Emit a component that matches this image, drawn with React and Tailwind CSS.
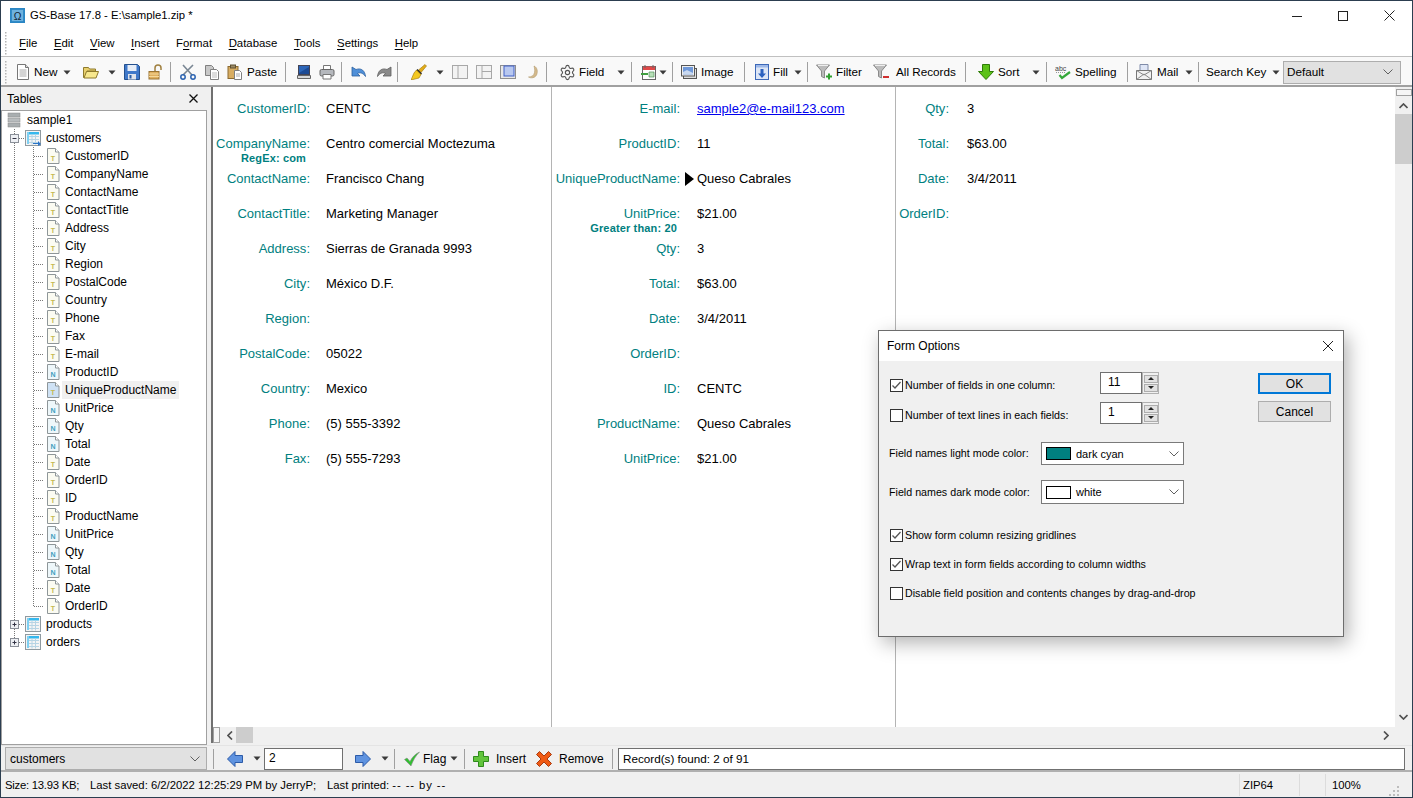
import React from "react";
import { Settings } from "lucide-react";

const S = ({ children, className = "" }) => (
  <svg viewBox="0 0 16 16" className={"w-4 h-4 shrink-0 " + className}>{children}</svg>
);

const Arrow = ({ className = "" }) => (
  <svg viewBox="0 0 8 5" className={"w-2 h-[5px] shrink-0 " + className}><path d="M0.5 0.5h7L4 4.5z" fill="#3a3a3a" /></svg>
);
const Sep = ({ className = "" }) => <div className={"w-px h-5 bg-[#a0a0a0] shrink-0 " + className} />;
const Txt = ({ className = "", children }) => <span className={"whitespace-nowrap shrink-0 " + className}>{children}</span>;
const U = ({ children }) => <span className="underline underline-offset-2">{children}</span>;

const DocI = ({ className }) => (
  <S className={className}><path d="M2.500.5h8l3 3v12h-11z" fill="#fff" stroke="#777" /><path d="M10.500.5v3h3" fill="#ddd" stroke="#777" /><path d="M4.500 6h7M4.500 8h7M4.500 10h7M4.500 12h7" stroke="#aaa" /></S>
);
const FolderI = ({ className }) => (
  <S className={className}><path d="M.5 3.500h5l1 1.500h6v2H4L2 13.500H.5z" fill="#e8cf6c" stroke="#8e7a2c" /><path d="M3.500 7.500h12l-2.500 6.500H1z" fill="#f8e88e" stroke="#8e7a2c" /></S>
);
const SaveI = ({ className }) => (
  <S className={className}><path d="M.5.5h13l2 2v13H.5z" fill="#3f78c9" stroke="#24508e" /><rect x="3.500" y="1" width="9" height="6" fill="#e8eef7" /><rect x="4" y="10" width="8" height="5.500" fill="#dfe3ea" /><rect x="5.500" y="11" width="2" height="3.500" fill="#2a5ea8" /></S>
);
const LockI = ({ className }) => (
  <S className={className}><path d="M7 7V4a3 3 0 016 0v2" fill="none" stroke="#a08040" strokeWidth="1.500" /><rect x="1" y="7.500" width="10" height="7.500" fill="#e0b060" stroke="#9a7434" /><path d="M1 10h10M1 12.500h10" stroke="#f5d89a" /></S>
);
const CutI = ({ className }) => (
  <S className={className}><path d="M3 1l9 10M13 1L3 11" stroke="#7a8794" strokeWidth="1.600" /><circle cx="3" cy="13" r="2.200" fill="none" stroke="#2a62b0" strokeWidth="1.500" /><circle cx="13" cy="13" r="2.200" fill="none" stroke="#2a62b0" strokeWidth="1.500" /></S>
);
const CopyI = ({ className }) => (
  <S className={className}><path d="M1.500 1.500h6l2 2v8h-8z" fill="#c8c8c8" stroke="#808080" /><path d="M6.500 5.500h6l2 2v8h-8z" fill="#fff" stroke="#808080" /><path d="M8 9h5M8 11h5M8 13h5" stroke="#bbb" /></S>
);
const PasteI = ({ className }) => (
  <S className={className}><rect x="1" y="2.500" width="10" height="12" fill="#d8ad62" stroke="#8b6a30" /><rect x="3.500" y="1" width="5" height="3" fill="#9a8a66" stroke="#5f5030" /><path d="M7.500 6.500h5l2 2v7h-7z" fill="#fff" stroke="#808080" /><path d="M9 10h4M9 12h4" stroke="#aaa" /></S>
);
const MonitorI = ({ className }) => (
  <S className={className}><rect x="2.500" y="1.500" width="11" height="9" fill="#2d66b8" stroke="#445" /><path d="M3 9l10-6v7H3z" fill="#1c4a94" /><path d="M1.500 11.500h13v3h-13z" fill="#d8d8d8" stroke="#666" /></S>
);
const PrinterI = ({ className }) => (
  <S className={className}><path d="M4.500 1.500h7v5h-7z" fill="#fff" stroke="#777" /><rect x="1" y="5.500" width="14" height="6.500" rx="1.500" fill="#b5b8bd" stroke="#666" /><path d="M4 10.500h8v4.500H4z" fill="#fff" stroke="#777" /></S>
);
const UndoI = ({ className }) => (
  <S className={className}><path d="M1 3v9h8L6.500 9.500C9 8 12 9 14.500 12.500 14 7 10.500 3.500 5 5.500z" fill="#4f8fd8" stroke="#2b5f9f" strokeWidth=".8" /></S>
);
const RedoI = ({ className }) => (
  <S className={className}><path d="M15 3v9H7l2.500-2.500C7 8 4 9 1.500 12.500 2 7 5.500 3.500 11 5.500z" fill="#8a8a8a" stroke="#5e5e5e" strokeWidth=".8" /></S>
);
const BrushI = ({ className }) => (
  <S className={className}><path d="M14 .5L15.500 2l-5.500 6.500L7.500 6z" fill="#e3ad18" stroke="#9c7208" strokeWidth=".6" /><path d="M6.500 5l4.500 4.500-1.500 1.500L5 6.500z" fill="#222" /><path d="M5.500 6l4.500 4.500-2 3.500-8 2 3-7z" fill="#f4c81f" stroke="#9c7208" strokeWidth=".6" /></S>
);
const Layout1 = ({ className }) => (
  <S className={className}><rect x=".5" y="1.500" width="15" height="13" fill="#f3f3f3" stroke="#a8a8a8" /><path d="M6 1.500v13" stroke="#a8a8a8" /></S>
);
const Layout2 = ({ className }) => (
  <S className={className}><rect x=".5" y="1.500" width="15" height="13" fill="#f3f3f3" stroke="#a8a8a8" /><path d="M6 1.500v13M6 7.500h9.500" stroke="#a8a8a8" /></S>
);
const Layout3 = ({ className }) => (
  <S className={className}><rect x=".5" y="1.500" width="15" height="13" fill="#e8e8e8" stroke="#909090" /><rect x="4" y="2" width="10" height="10" fill="#b8c8f0" stroke="#4060c8" /></S>
);
const MoonI = ({ className }) => (
  <S className={className}><path d="M9 2c3.500 1.500 4 6 2.500 9S6 14.500 3.500 13C6.500 13 9 11.500 9.500 8.500 10 6 9.500 4 9 2z" fill="#d4b98c" stroke="#b0986c" strokeWidth=".6" /></S>
);
const CalI = ({ className }) => (
  <S className={className}><rect x="1.500" y="2.500" width="13" height="13" fill="#fff" stroke="#666" /><rect x="2" y="2.500" width="12" height="3.500" fill="#e04848" /><path d="M4 1v3M12 1v3" stroke="#666" /><path d="M0 9h7v2H0z" fill="#40a040" /><path d="M8 8h5v5H8z" fill="#b8e0b8" stroke="#50905a" strokeWidth=".7" /></S>
);
const ImageI = ({ className }) => (
  <S className={className}><rect x="2.500" y="4.500" width="13" height="10" fill="#ddd" stroke="#555" /><rect x=".5" y="1.500" width="13" height="10.500" fill="#eee" stroke="#555" /><rect x="2" y="3" width="10" height="7.500" fill="#6f98d8" /><path d="M2 8l4-2 6 3v1.500H2z" fill="#c8d8f0" /></S>
);
const FillI = ({ className }) => (
  <S className={className}><rect x="1.500" y=".5" width="13" height="15" fill="#dde6f6" stroke="#3c68b8" /><path d="M2 1h12v2.500H2z" fill="#9db8e8" /><path d="M6.500 5h3v4.500h2.500L8 14 4 9.500h2.500z" fill="#2c62c0" /></S>
);
const FilterI = ({ children, className }) => (
  <S className={className}><path d="M.5 1h13L8.500 7v7l-3-1.500V7z" fill="#bbb" stroke="#8a8a8a" /><path d="M2 1.500h10" stroke="#eee" />{children}</S>
);
const SortI = ({ className }) => (
  <S className={className}><path d="M4.500 .5h7v7H15.500L8 15.500.5 7.500h4z" fill="#5cc218" stroke="#2f7c08" /></S>
);
const SpellI = ({ className }) => (
  <S className={className}><text x="0" y="6.500" fontSize="7" fill="#444" fontFamily="Liberation Sans">abc</text><path d="M1 8.500h9" stroke="#999" strokeDasharray="1 1" /><path d="M4.500 11l2.500 3L15 8" fill="none" stroke="#35a83a" strokeWidth="2.200" /></S>
);
const MailI = ({ className }) => (
  <S className={className}><path d="M4 .5h8v8H4z" fill="#dfe6f6" stroke="#7f8ba8" /><path d="M.5 6.500h15v9H.5z" fill="#f2f2f2" stroke="#777" /><path d="M.5 15.500L8 10l7.500 5.500M.5 6.500L8 11l7.500-4.500" fill="none" stroke="#888" /></S>
);
const LeftI = ({ className }) => (
  <S className={className}><path d="M.5 8L8 .5V4.500h7.500v7H8v4z" fill="#5f93e0" stroke="#2c5ba8" /></S>
);
const RightI = ({ className }) => (
  <S className={className}><path d="M15.500 8L8 .5V4.500H.5v7H8v4z" fill="#5f93e0" stroke="#2c5ba8" /></S>
);
const CheckI = ({ className }) => (
  <S className={className}><path d="M.5 8.500L3 7l3 3.500C8 6.500 11 3 15.500 1 11.500 5 9 9.500 7 15z" fill="#30c030" stroke="#888" strokeWidth=".6" /></S>
);
const PlusI = ({ className }) => (
  <S className={className}><path d="M5.500 .5h5v5h5v5h-5v5h-5v-5h-5v-5h5z" fill="#62c43c" stroke="#2f8a1c" /></S>
);
const RemoveI = ({ className }) => (
  <S className={className}><path d="M3.500 .5L8 5l4.500-4.500 3 3L11 8l4.500 4.500-3 3L8 11l-4.500 4.500-3-3L5 8 .5 3.500z" fill="#ef5a14" stroke="#a83a10" /></S>
);

const Combo = ({ className = "", children }) => (
  <div className={"flex items-center justify-between bg-[#e1e1e1] border border-[#adadad] shrink-0 " + className}>
    <span className="whitespace-nowrap">{children}</span>
    <svg viewBox="0 0 10 6" className="w-[10px] h-[6px] shrink-0"><path d="M.5.5L5 5 9.500.5" fill="none" stroke="#606060" /></svg>
  </div>
);

const Grip = ({ className = "" }) => (
  <svg viewBox="0 0 3 24" className={"w-[3px] h-6 shrink-0 " + className}>
    {[1, 4, 7, 10, 13, 16, 19, 22].map((y) => <rect key={y} x="1" y={y} width="1.500" height="1.500" fill="#b4b4b4" />)}
  </svg>
);

const Toolbar = () => (
  <div className="flex items-center h-[26px] pt-[2px] text-[11.7px] bg-[#f9f9f9] border-b-2 border-[#a0a0a0] box-content shrink-0">
    <Grip className="ml-[3px]" />
    <DocI className="ml-[8px]" /><Txt className="ml-[3px] w-[25px]">New</Txt><Arrow className="ml-[4px]" />
    <FolderI className="ml-[12px]" /><Arrow className="ml-[9px]" />
    <SaveI className="ml-[8px]" /><LockI className="ml-[8px]" /><Sep className="ml-[6px]" />
    <CutI className="ml-[9px]" /><CopyI className="ml-[8px]" /><PasteI className="ml-[7px]" /><Txt className="ml-[4px] w-[28px]">Paste</Txt><Sep className="ml-[10px]" />
    <MonitorI className="ml-[10px]" /><PrinterI className="ml-[7px]" /><Sep className="ml-[6px]" />
    <UndoI className="ml-[9px]" /><RedoI className="ml-[9px]" /><Sep className="ml-[5px]" />
    <BrushI className="ml-[13px]" /><Arrow className="ml-[9px]" />
    <Layout1 className="ml-[8px]" /><Layout2 className="ml-[8px]" /><Layout3 className="ml-[8px]" /><MoonI className="ml-[9px]" /><Sep className="ml-[5px]" />
    <Settings className="ml-[12px] w-[17px] h-[17px] shrink-0 text-[#555]" strokeWidth={1.6} /><Txt className="ml-[3px] w-[25px]">Field</Txt><Arrow className="ml-[13px]" /><Sep className="ml-[6px]" />
    <CalI className="ml-[9px]" /><Arrow className="ml-[2px]" /><Sep className="ml-[5px]" />
    <ImageI className="ml-[8px]" /><Txt className="ml-[4px] w-[33px]">Image</Txt><Sep className="ml-[10px]" />
    <FillI className="ml-[9px]" /><Txt className="ml-[3px] w-[15px]">Fill</Txt><Arrow className="ml-[6px]" /><Sep className="ml-[5px]" />
    <FilterI className="ml-[8px]"><path d="M10 12.500h6M13 9.500v6" stroke="#30a030" strokeWidth="2" /></FilterI><Txt className="ml-[4px] w-[26px]">Filter</Txt>
    <FilterI className="ml-[11px]"><path d="M10 13h6" stroke="#d03030" strokeWidth="2" /></FilterI><Txt className="ml-[7px] w-[59px]">All Records</Txt><Sep className="ml-[10px]" />
    <SortI className="ml-[12px]" /><Txt className="ml-[4px] w-[21px]">Sort</Txt><Arrow className="ml-[13px]" /><Sep className="ml-[6px]" />
    <SpellI className="ml-[8px]" /><Txt className="ml-[4px] w-[41px]">Spelling</Txt><Sep className="ml-[11px]" />
    <MailI className="ml-[8px]" /><Txt className="ml-[5px] w-[22px]">Mail</Txt><Arrow className="ml-[6px]" /><Sep className="ml-[5px]" />
    <Txt className="ml-[7px] w-[57px]">Search Key</Txt><Arrow className="ml-[9px]" />
    <Combo className="ml-[3px] w-[118px] h-[23px] pl-[3px] pr-[7px]">Default</Combo>
  </div>
);

const Guide = ({ last }) => (
  <svg viewBox="2 0 42 18" className="w-[42px] h-[18px] shrink-0">
    <path d="M14.500 0v18" stroke="#777" strokeDasharray="1 1" />
    <path d={last ? "M33.500 0v9" : "M33.500 0v18"} stroke="#777" strokeDasharray="1 1" />
    <path d="M34 9.500h10" stroke="#777" strokeDasharray="1 1" />
  </svg>
);
const FieldIcon = ({ kind, selected }) => (
  <svg viewBox="0 0 14 16" className="w-[14px] h-4 shrink-0 ml-[2px]">
    <path d="M1.500 .5h8l3.500 3.500v11.500h-11.500z" fill={selected ? "#cfe2f5" : kind === "N" ? "#eef7fa" : "#fbfbf2"} stroke="#8e9699" />
    <path d="M9.500 .5v3.500h3.500" fill="#fff" stroke="#8e9699" />
    <text x="7" y="13" fontSize="7" fontWeight="700" textAnchor="middle" fontFamily="Liberation Sans" fill={kind === "N" ? "#3f9fc0" : "#c4b850"}>{kind}</text>
  </svg>
);
const TableIcon = ({ badge }) => (
  <svg viewBox="0 0 16 16" className="w-4 h-4 shrink-0">
    <rect x=".5" y=".5" width="15" height="15" fill="#f4f4f4" stroke="#8f9aa0" />
    <rect x="2" y="2" width="12" height="2.500" fill="#35b8ee" />
    <rect x="2" y="2" width="2" height="12" fill="#7fd0f2" />
    <path d="M4 6.500h10M4 9.500h10M4 12.500h10M7 4.500v10M10.500 4.500v10" stroke="#b6d4e4" />
    {badge && <path d="M8 13h5v-2l3 3-3 2v-2H8z" fill="#2a74c8" />}
  </svg>
);
const Box = ({ minus, last }) => (
  <svg viewBox="2 0 23 18" className="w-[23px] h-[18px] shrink-0">
    <path d={last ? "M14.500 0v6" : "M14.500 0v18"} stroke="#777" strokeDasharray="1 1" />
    <path d="M19 9.500h6" stroke="#777" strokeDasharray="1 1" />
    <rect x="10.500" y="5.500" width="8" height="8" fill="#eef0f4" stroke="#8a8f98" />
    <path d="M12.500 9.500h4" stroke="#334" />
    {!minus && <path d="M14.500 7.500v4" stroke="#334" />}
  </svg>
);

const fields = [
  ["CustomerID", "T"], ["CompanyName", "T"], ["ContactName", "T"], ["ContactTitle", "T"], ["Address", "T"], ["City", "T"],
  ["Region", "T"], ["PostalCode", "T"], ["Country", "T"], ["Phone", "T"], ["Fax", "T"], ["E-mail", "T"], ["ProductID", "N"],
  ["UniqueProductName", "T", true], ["UnitPrice", "N"], ["Qty", "N"], ["Total", "N"], ["Date", "T"], ["OrderID", "T"], ["ID", "T"],
  ["ProductName", "T"], ["UnitPrice", "N"], ["Qty", "N"], ["Total", "N"], ["Date", "T"], ["OrderID", "T"],
];

const Tree = () => (
  <div className="flex-1 bg-white border border-[#a0a0a0] overflow-hidden">
    <div className="flex items-center h-[18px] pl-[5px]">
      <svg viewBox="0 0 14 16" className="w-[14px] h-4 shrink-0">
        <rect x="1" y="1" width="12" height="4" fill="#a9aeb0" stroke="#888" strokeWidth=".5" />
        <rect x="1" y="6" width="12" height="4" fill="#b8bcbe" stroke="#888" strokeWidth=".5" />
        <rect x="1" y="11" width="12" height="4" fill="#a9aeb0" stroke="#888" strokeWidth=".5" />
      </svg>
      <span className="ml-[6px]">sample1</span>
    </div>
    <div className="flex items-center h-[18px]"><Box minus /><TableIcon badge /><span className="ml-[5px]">customers</span></div>
    {fields.map(([n, k, sel], i) => (
      <div key={i} className="flex items-center h-[18px]">
        <Guide last={i === fields.length - 1} />
        <FieldIcon kind={k} selected={sel} />
        <span className={sel ? "ml-[2px] px-[3px] bg-[#f0f0f0] h-[18px] leading-[18px]" : "ml-[5px]"}>{n}</span>
      </div>
    ))}
    <div className="flex items-center h-[18px]"><Box /><TableIcon /><span className="ml-[5px]">products</span></div>
    <div className="flex items-center h-[18px]"><Box last /><TableIcon /><span className="ml-[5px]">orders</span></div>
  </div>
);

const Row = ({ label, value, labelW, valueP = "pl-4", marker, link }) => (
  <div className="flex items-start h-[35px]">
    <div className={"flex flex-col items-end shrink-0 " + labelW}>
      <span className="text-[#008080] leading-4 whitespace-nowrap">{label}:</span>
    </div>
    <div className={"relative flex-1 leading-4 whitespace-nowrap " + valueP}>
      {marker && <svg viewBox="0 0 9 14" className="absolute left-[5px] top-px w-[9px] h-[14px]"><path d="M0 0l9 7-9 7z" fill="#000" /></svg>}
      {link ? <span className="text-[#0000ee] underline">{value}</span> : value}
    </div>
  </div>
);

const SubRow = ({ label, value, sub, labelW, valueP = "pl-4", subW }) => (
  <div className="flex items-start h-[35px]">
    <div className={"flex flex-col items-end shrink-0 " + labelW}>
      <span className="text-[#008080] leading-4 whitespace-nowrap">{label}:</span>
      <span className={"text-[#008080] text-[11px] font-bold leading-[12px] tracking-[0.15px] whitespace-nowrap " + subW}>{sub}</span>
    </div>
    <div className={"flex-1 leading-4 whitespace-nowrap " + valueP}>{value}</div>
  </div>
);

const col1 = [["CustomerID", "CENTC"], ["CompanyName", "Centro comercial Moctezuma", "RegEx: com"], ["ContactName", "Francisco Chang"], ["ContactTitle", "Marketing Manager"], ["Address", "Sierras de Granada 9993"], ["City", "México D.F."], ["Region", ""], ["PostalCode", "05022"], ["Country", "Mexico"], ["Phone", "(5) 555-3392"], ["Fax", "(5) 555-7293"]];
const col2 = [["E-mail", "sample2@e-mail123.com"], ["ProductID", "11"], ["UniqueProductName", "Queso Cabrales"], ["UnitPrice", "$21.00", "Greater than: 20"], ["Qty", "3"], ["Total", "$63.00"], ["Date", "3/4/2011"], ["OrderID", ""], ["ID", "CENTC"], ["ProductName", "Queso Cabrales"], ["UnitPrice", "$21.00"]];
const col3 = [["Qty", "3"], ["Total", "$63.00"], ["Date", "3/4/2011"], ["OrderID", ""]];

const Form = () => (
  <div className="flex-1 flex text-[13px] bg-white border-l-2 border-[#707070] font-['Liberation_Sans',sans-serif] min-w-0">
    <div className="w-[339px] border-r border-[#b4b4b4] pt-[14px] shrink-0">
      {col1.map(([l, v, s]) => s ? <SubRow key={l} label={l} value={v} sub={s} labelW="w-[97px]" subW="mr-1" /> : <Row key={l} label={l} value={v} labelW="w-[97px]" />)}
    </div>
    <div className="w-[344px] border-r border-[#b4b4b4] pt-[14px] shrink-0">
      {col2.map(([l, v, s], i) => s ? <SubRow key={i} label={l} value={v} sub={s} labelW="w-[128px]" valueP="pl-[17px]" subW="mr-[3px]" /> : <Row key={i} label={l} value={v} labelW="w-[128px]" valueP="pl-[17px]" marker={i === 2} link={i === 0} />)}
    </div>
    <div className="flex-1 pt-[14px]">
      {col3.map(([l, v]) => <Row key={l} label={l} value={v} labelW="w-[53px]" valueP="pl-[18px]" />)}
    </div>
  </div>
);

const Chev = ({ d }) => (
  <svg viewBox="0 0 9 6" className="w-[9px] h-[6px] shrink-0"><path d={d} fill="none" stroke="#505050" strokeWidth="1.700" /></svg>
);

const VScroll = () => (
  <div className="w-[17px] bg-[#f0f0f0] flex flex-col items-center shrink-0">
    <div className="w-[16px] h-[7px] bg-[#f5f5f5] border border-[#a0a0a0] mt-[2px]" />
    <div className="mt-[7px]"><Chev d="M.5 5L4.500 1l4 4" /></div>
    <div className="w-full h-[50px] bg-[#cdcdcd] mt-[5px]" />
    <div className="flex-1" />
    <div className="mb-[7px]"><Chev d="M.5 1l4 4 4-4" /></div>
  </div>
);

const HScroll = () => (
  <div className="h-[16px] flex items-center bg-[#f0f0f0] border-l-2 border-[#707070] shrink-0">
    <div className="w-[7px] h-[16px] bg-[#f5f5f5] border border-[#a0a0a0] shrink-0" />
    <svg viewBox="0 0 6 9" className="w-[6px] h-[9px] ml-[7px] shrink-0"><path d="M5 .5l-4 4 4 4" fill="none" stroke="#505050" strokeWidth="1.700" /></svg>
    <div className="w-[17px] h-[16px] bg-[#cdcdcd] ml-[3px] shrink-0" />
    <div className="flex-1" />
    <svg viewBox="0 0 6 9" className="w-[6px] h-[9px] mr-[23px] shrink-0"><path d="M1 .5l4 4-4 4" fill="none" stroke="#505050" strokeWidth="1.700" /></svg>
  </div>
);

const BottomBar = () => (
  <div className="flex items-center h-[27px] pt-px bg-[#f0f0f0] border-b-2 border-[#b0b0b0] border-t border-t-[#e4e4e4] shrink-0">
    <Combo className="ml-[4px] w-[202px] h-[23px] pl-[4px] pr-[6px]">customers</Combo>
    <Sep className="ml-[6px]" />
    <LeftI className="ml-[13px]" /><Arrow className="ml-[10px]" />
    <div className="ml-[3px] w-[79px] h-[22px] bg-white border border-[#707070] pl-[4px] leading-[18px] shrink-0">2</div>
    <RightI className="ml-[12px]" /><Arrow className="ml-[10px]" /><Sep className="ml-[5px]" />
    <CheckI className="ml-[9px]" /><Txt className="ml-[3px] w-[22px]">Flag</Txt><Arrow className="ml-[5px]" /><Sep className="ml-[6px]" />
    <PlusI className="ml-[8px]" /><Txt className="ml-[7px] w-[29px]">Insert</Txt>
    <RemoveI className="ml-[11px]" /><Txt className="ml-[7px] w-[43px]">Remove</Txt><Sep className="ml-[10px]" />
    <div className="ml-[5px] w-[787px] h-[22px] bg-white border border-[#707070] pl-[4px] leading-[19px] text-[11.7px] shrink-0">Record(s) found: 2 of 91</div>
  </div>
);

const StatusBar = () => (
  <div className="flex items-center h-[25px] pt-px bg-[#f0f0f0] text-[11.3px] shrink-0">
    <Txt className="ml-[4px] w-[85px] tracking-[-0.25px]">Size: 13.93 KB;</Txt>
    <Txt className="w-[237px]">Last saved: 6/2/2022 12:25:29 PM by JerryP;</Txt>
    <Txt className="w-[912px]">Last printed: <span className="tracking-[0.9px]">-- -- by --</span></Txt>
    <div className="w-px h-[22px] bg-[#dcdcdc] shrink-0" />
    <Txt className="pl-[3px] w-[59px]">ZIP64</Txt>
    <div className="w-px h-[22px] bg-[#dcdcdc] shrink-0" />
    <div className="w-[25px] shrink-0" />
    <div className="w-px h-[22px] bg-[#dcdcdc] shrink-0" />
    <Txt className="ml-[6px] w-[60px]">100%</Txt>
    <svg viewBox="0 0 12 12" className="w-3 h-3 self-end shrink-0 -ml-[4px]">
      {[[9, 9], [5, 9], [1, 9], [9, 5], [5, 5], [9, 1]].map(([x, y]) => <rect key={x + "-" + y} x={x} y={y} width="2" height="2" fill="#bdbdbd" />)}
    </svg>
  </div>
);

const Check = ({ on, className = "" }) => (
  <span className={"w-[13px] h-[13px] border border-[#333] bg-white flex items-center justify-center shrink-0 ml-px " + className}>
    {on && <svg viewBox="0 0 11 11" className="w-[11px] h-[11px]"><path d="M1.500 5.500l2.500 2.500 5.500-6" fill="none" stroke="#555" strokeWidth="1.300" /></svg>}
  </span>
);

const Spin = ({ v }) => (
  <div className="flex h-[22px] w-[59px] shrink-0">
    <div className="w-[42px] bg-white border border-[#707070] pl-[7px] leading-[18px] text-[12px]">{v}</div>
    <div className="w-[17px] border border-[#b0b0b0] flex flex-col justify-center items-center gap-px bg-[#f0f0f0]">
      <div className="w-[14px] h-[8px] bg-[#e1e1e1] border border-[#adadad] flex items-center justify-center"><svg viewBox="0 0 6 3" className="w-[6px] h-[3px]"><path d="M3 0l3 3H0z" fill="#222" /></svg></div>
      <div className="w-[14px] h-[8px] bg-[#e1e1e1] border border-[#adadad] flex items-center justify-center"><svg viewBox="0 0 6 3" className="w-[6px] h-[3px]"><path d="M0 0h6L3 3z" fill="#222" /></svg></div>
    </div>
  </div>
);

const ColorCombo = ({ swatch, name, className = "" }) => (
  <div className={"flex items-center w-[143px] bg-white border border-[#7a7a7a] pl-[4px] pr-[4px] shrink-0 text-[11px] " + className}>
    <span className={"w-[25px] h-[13px] border border-black shrink-0 " + swatch} />
    <span className="ml-[5px] flex-1 pt-px">{name}</span>
    <svg viewBox="0 0 10 6" className="w-[10px] h-[6px] shrink-0"><path d="M.5.5L5 5 9.500.5" fill="none" stroke="#606060" /></svg>
  </div>
);

const Dialog = () => (
  <div className="absolute left-[877px] top-[329px] w-[466px] h-[307px] flex flex-col bg-[#f0f0f0] border border-[#6d6d6d] shadow-[4px_6px_18px_rgba(0,0,0,0.3)]">
    <div className="flex items-center justify-between h-[30px] bg-white pl-[8px] pr-[9px] shrink-0">
      <span>Form Options</span>
      <svg viewBox="0 0 12 12" className="w-3 h-3"><path d="M1 1l10 10M11 1L1 11" stroke="#222" /></svg>
    </div>
    <div className="flex pl-[10px]">
      <div className="w-[369px] shrink-0 text-[10.7px]">
        <div className="flex items-center h-[22px] mt-[11px]"><Check on className="mt-1" /><span className="ml-[2px] mt-1 w-[195px] whitespace-nowrap">Number of fields in one column:</span><Spin v="11" /></div>
        <div className="flex items-center h-[22px] mt-[8px]"><Check className="mt-1" /><span className="ml-[2px] mt-1 w-[195px] whitespace-nowrap">Number of text lines in each fields:</span><Spin v="1" /></div>
        <div className="flex items-center h-[23px] mt-[18px]"><span className="w-[152px] whitespace-nowrap">Field names light mode color:</span><ColorCombo swatch="bg-[#008080]" name="dark cyan" className="h-[23px]" /></div>
        <div className="flex items-center h-[24px] mt-[15px]"><span className="w-[152px] whitespace-nowrap">Field names dark mode color:</span><ColorCombo swatch="bg-white" name="white" className="h-[24px]" /></div>
        <div className="flex items-center h-[14px] mt-[24px]"><Check on /><span className="ml-[2px] whitespace-nowrap">Show form column resizing gridlines</span></div>
        <div className="flex items-center h-[14px] mt-[15px]"><Check on /><span className="ml-[2px] whitespace-nowrap">Wrap text in form fields according to column widths</span></div>
        <div className="flex items-center h-[14px] mt-[15px]"><Check /><span className="ml-[2px] whitespace-nowrap">Disable field position and contents changes by drag-and-drop</span></div>
      </div>
      <div className="w-[73px] shrink-0 mt-[12px]">
        <div className="h-[21px] border-2 border-[#0078d7] bg-[#e1e1e1] flex items-center justify-center">OK</div>
        <div className="h-[21px] mt-[7px] border border-[#adadad] bg-[#e1e1e1] flex items-center justify-center">Cancel</div>
      </div>
    </div>
  </div>
);

export default function App() {
  const menus = [["", "F", "ile"], ["", "E", "dit"], ["", "V", "iew"], ["", "I", "nsert"], ["F", "o", "rmat"], ["", "D", "atabase"], ["", "T", "ools"], ["", "S", "ettings"], ["", "H", "elp"]];
  return (
    <div className="relative w-[1413px] h-[798px] flex flex-col overflow-hidden bg-white border border-[#2c3e50] text-[12px] text-black font-['Liberation_Sans',sans-serif]">
      <div className="flex items-center h-[29px] shrink-0">
        <svg viewBox="0 0 16 16" className="w-[15px] h-[15px] ml-[9px] shrink-0">
          <rect width="16" height="16" fill="#2a86c4" /><rect x="2" y="2" width="12" height="12" fill="#6fb2de" />
          <text x="8" y="12.500" fontSize="11" textAnchor="middle" fill="#123" fontFamily="Liberation Sans">Ω</text>
        </svg>
        <span className="ml-[5px] text-[11.3px]">GS-Base 17.8 - E:\sample1.zip *</span>
        <div className="flex-1" />
        <svg viewBox="0 0 10 10" className="w-[10px] h-[10px] shrink-0"><path d="M0 5.500h10" stroke="#222" /></svg>
        <svg viewBox="0 0 10 10" className="w-[10px] h-[10px] ml-[36px] shrink-0"><rect x=".5" y=".5" width="9" height="9" fill="none" stroke="#222" /></svg>
        <svg viewBox="0 0 11 11" className="w-[11px] h-[11px] ml-[36px] mr-[17px] shrink-0"><path d="M.5.5l10 10M10.500.5l-10 10" stroke="#222" /></svg>
      </div>
      <div className="flex items-center h-[24px] pt-[2px] box-content border-b border-[#c0c0c0] shrink-0">
        <Grip className="ml-[3px] -mt-[2px]" />
        <div className="flex gap-[16.5px] ml-[12px] text-[11.4px]">
          {menus.map(([a, b, c]) => <span key={b + c}>{a}<U>{b}</U>{c}</span>)}
        </div>
      </div>
      <Toolbar />
      <div className="flex h-[658px] shrink-0">
        <div className="w-[206px] flex flex-col shrink-0">
          <div className="flex items-center justify-between h-[23px] bg-[#f0f0f0] pl-[6px] pr-[9px] shrink-0">
            <span>Tables</span>
            <svg viewBox="0 0 9 9" className="w-[9px] h-[9px]"><path d="M.5.5l8 8M8.500.5l-8 8" stroke="#111" strokeWidth="1.300" /></svg>
          </div>
          <Tree />
        </div>
        <div className="w-[4px] bg-[#f0f0f0] shrink-0" />
        <div className="flex-1 flex flex-col min-w-0">
          <div className="flex-1 flex min-h-0">
            <Form />
            <VScroll />
          </div>
          <HScroll />
          <div className="h-[2px] bg-[#f0f0f0] shrink-0" />
        </div>
      </div>
      <BottomBar />
      <StatusBar />
      <Dialog />
    </div>
  );
}
